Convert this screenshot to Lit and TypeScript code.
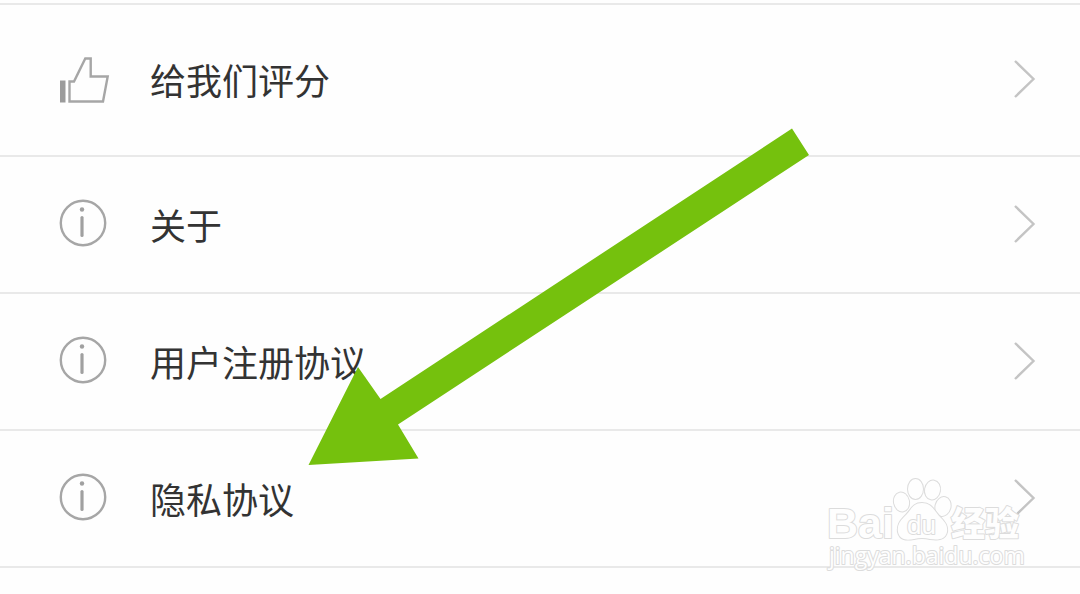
import { LitElement, html, css, svg } from "lit";
import { customElement, property } from "lit/decorators.js";

const thumb = svg`
  <g transform="translate(1 4)">
    <rect x="0" y="22.5" width="5.5" height="22" fill="#9b9b9b"></rect>
    <path d="M9.5 43.5V23.5H14L25.3 .5H30.7V18.5H47.7L43 43.5Z" fill="none" stroke="#a6a6a6" stroke-width="2.4"></path>
  </g>`;

const info = svg`
  <circle cx="24" cy="24" r="22.2" fill="none" stroke="#a6a6a6" stroke-width="2.4"></circle>
  <circle cx="23" cy="10.5" r="2.2" fill="#a0a0a0"></circle>
  <path d="M23 18.500V36.500" stroke="#a0a0a0" stroke-width="3.2" stroke-linecap="round"></path>`;

@customElement("settings-row")
export class SettingsRow extends LitElement {
  @property() label = "";
  @property() icon = "info";

  static styles = css`
    :host {
      display: block;
      border-bottom: 2px solid #e9e9e9;
    }
    .row {
      display: flex;
      align-items: center;
      box-sizing: border-box;
      min-height: var(--row-height, 135px);
      padding: 0 44px 2px 59px;
      color: #333;
      text-decoration: none;
    }
    .icon {
      flex: none;
      width: 52px;
      height: 50px;
      margin-right: 39px;
    }
    .label {
      flex: 1;
      font-size: 36px;
      line-height: 52px;
    }
    .chevron {
      flex: none;
      width: 24px;
      height: 40px;
    }
  `;

  render() {
    return html`
      <a class="row" href="#">
        <svg class="icon" viewBox="0 0 52 50" aria-hidden="true">
          ${this.icon === "thumb" ? thumb : info}
        </svg>
        <span class="label">${this.label}</span>
        <svg class="chevron" viewBox="0 0 24 40" aria-hidden="true">
          <path d="M3 2L21.5 20L3 38" fill="none" stroke="#c4c4c4" stroke-width="2.4"></path>
        </svg>
      </a>
    `;
  }
}

@customElement("app-root")
export class AppRoot extends LitElement {
  static styles = css`
    :host {
      display: flow-root;
      position: relative;
      min-height: 100vh;
      overflow: hidden;
      background: #fefefe;
      font-family: "Noto Sans CJK SC", "Liberation Sans", sans-serif;
    }
    .list {
      margin-top: 3px;
      border-top: 2px solid #e9e9e9;
    }
    .first {
      --row-height: 150px;
    }
    .arrow {
      position: absolute;
      left: 308px;
      top: 128px;
      width: 502px;
      height: 338px;
      pointer-events: none;
    }
    .watermark {
      position: absolute;
      right: 50px;
      bottom: 14px;
      width: 210px;
      height: 110px;
      pointer-events: none;
    }
    .mark {
      fill: #fefefe;
      stroke: #dcdcdc;
      stroke-width: 2px;
      paint-order: stroke;
      stroke-linejoin: round;
    }
    .brand {
      font: bold 43px "Liberation Sans", sans-serif;
    }
    .du {
      font: 26px "Liberation Sans", sans-serif;
    }
    .cjk {
      font: 900 34px "Noto Sans CJK SC", sans-serif;
    }
    .site {
      font: 23px "Open Sans", sans-serif;
    }
  `;

  render() {
    return html`
      <nav class="list">
        <settings-row class="first" icon="thumb" label="给我们评分"></settings-row>
        <settings-row label="关于"></settings-row>
        <settings-row label="用户注册协议"></settings-row>
        <settings-row label="隐私协议"></settings-row>
      </nav>
      <svg class="watermark" viewBox="820 470 210 110" role="img" aria-label="Baidu 经验">
        <g class="mark">
          <text class="brand" x="827" y="538">Bai</text>
          <ellipse cx="901.5" cy="502" rx="7.5" ry="9.5" transform="rotate(-12 901.5 502)"></ellipse>
          <ellipse cx="915.5" cy="489" rx="7.500" ry="10"></ellipse>
          <ellipse cx="932.5" cy="490" rx="7.500" ry="9.5" transform="rotate(10 932.5 490)"></ellipse>
          <ellipse cx="943" cy="506.5" rx="7.5" ry="9.5" transform="rotate(14 943 506.5)"></ellipse>
          <path d="M922 503C912 503 911 511 904 517C899 522 897 526 898 532C900 541 908 540 914 539Q922 537 930 539C938 540 945 540 947 532C948 526 945 522 941 518C934 511 932 503 922 503Z"></path>
          <text class="du" x="907" y="534">du</text>
          <text class="cjk" x="951" y="536">经验</text>
          <text class="site" x="829" y="564">jingyan.baidu.com</text>
        </g>
      </svg>
      <svg class="arrow" viewBox="308 128 502 338" aria-hidden="true">
        <path d="M308.5 465L358 367L380.5 399L792 128.5L809 155L398 424.5L418.5 458.5Z" fill="#75c10d"></path>
      </svg>
    `;
  }
}
